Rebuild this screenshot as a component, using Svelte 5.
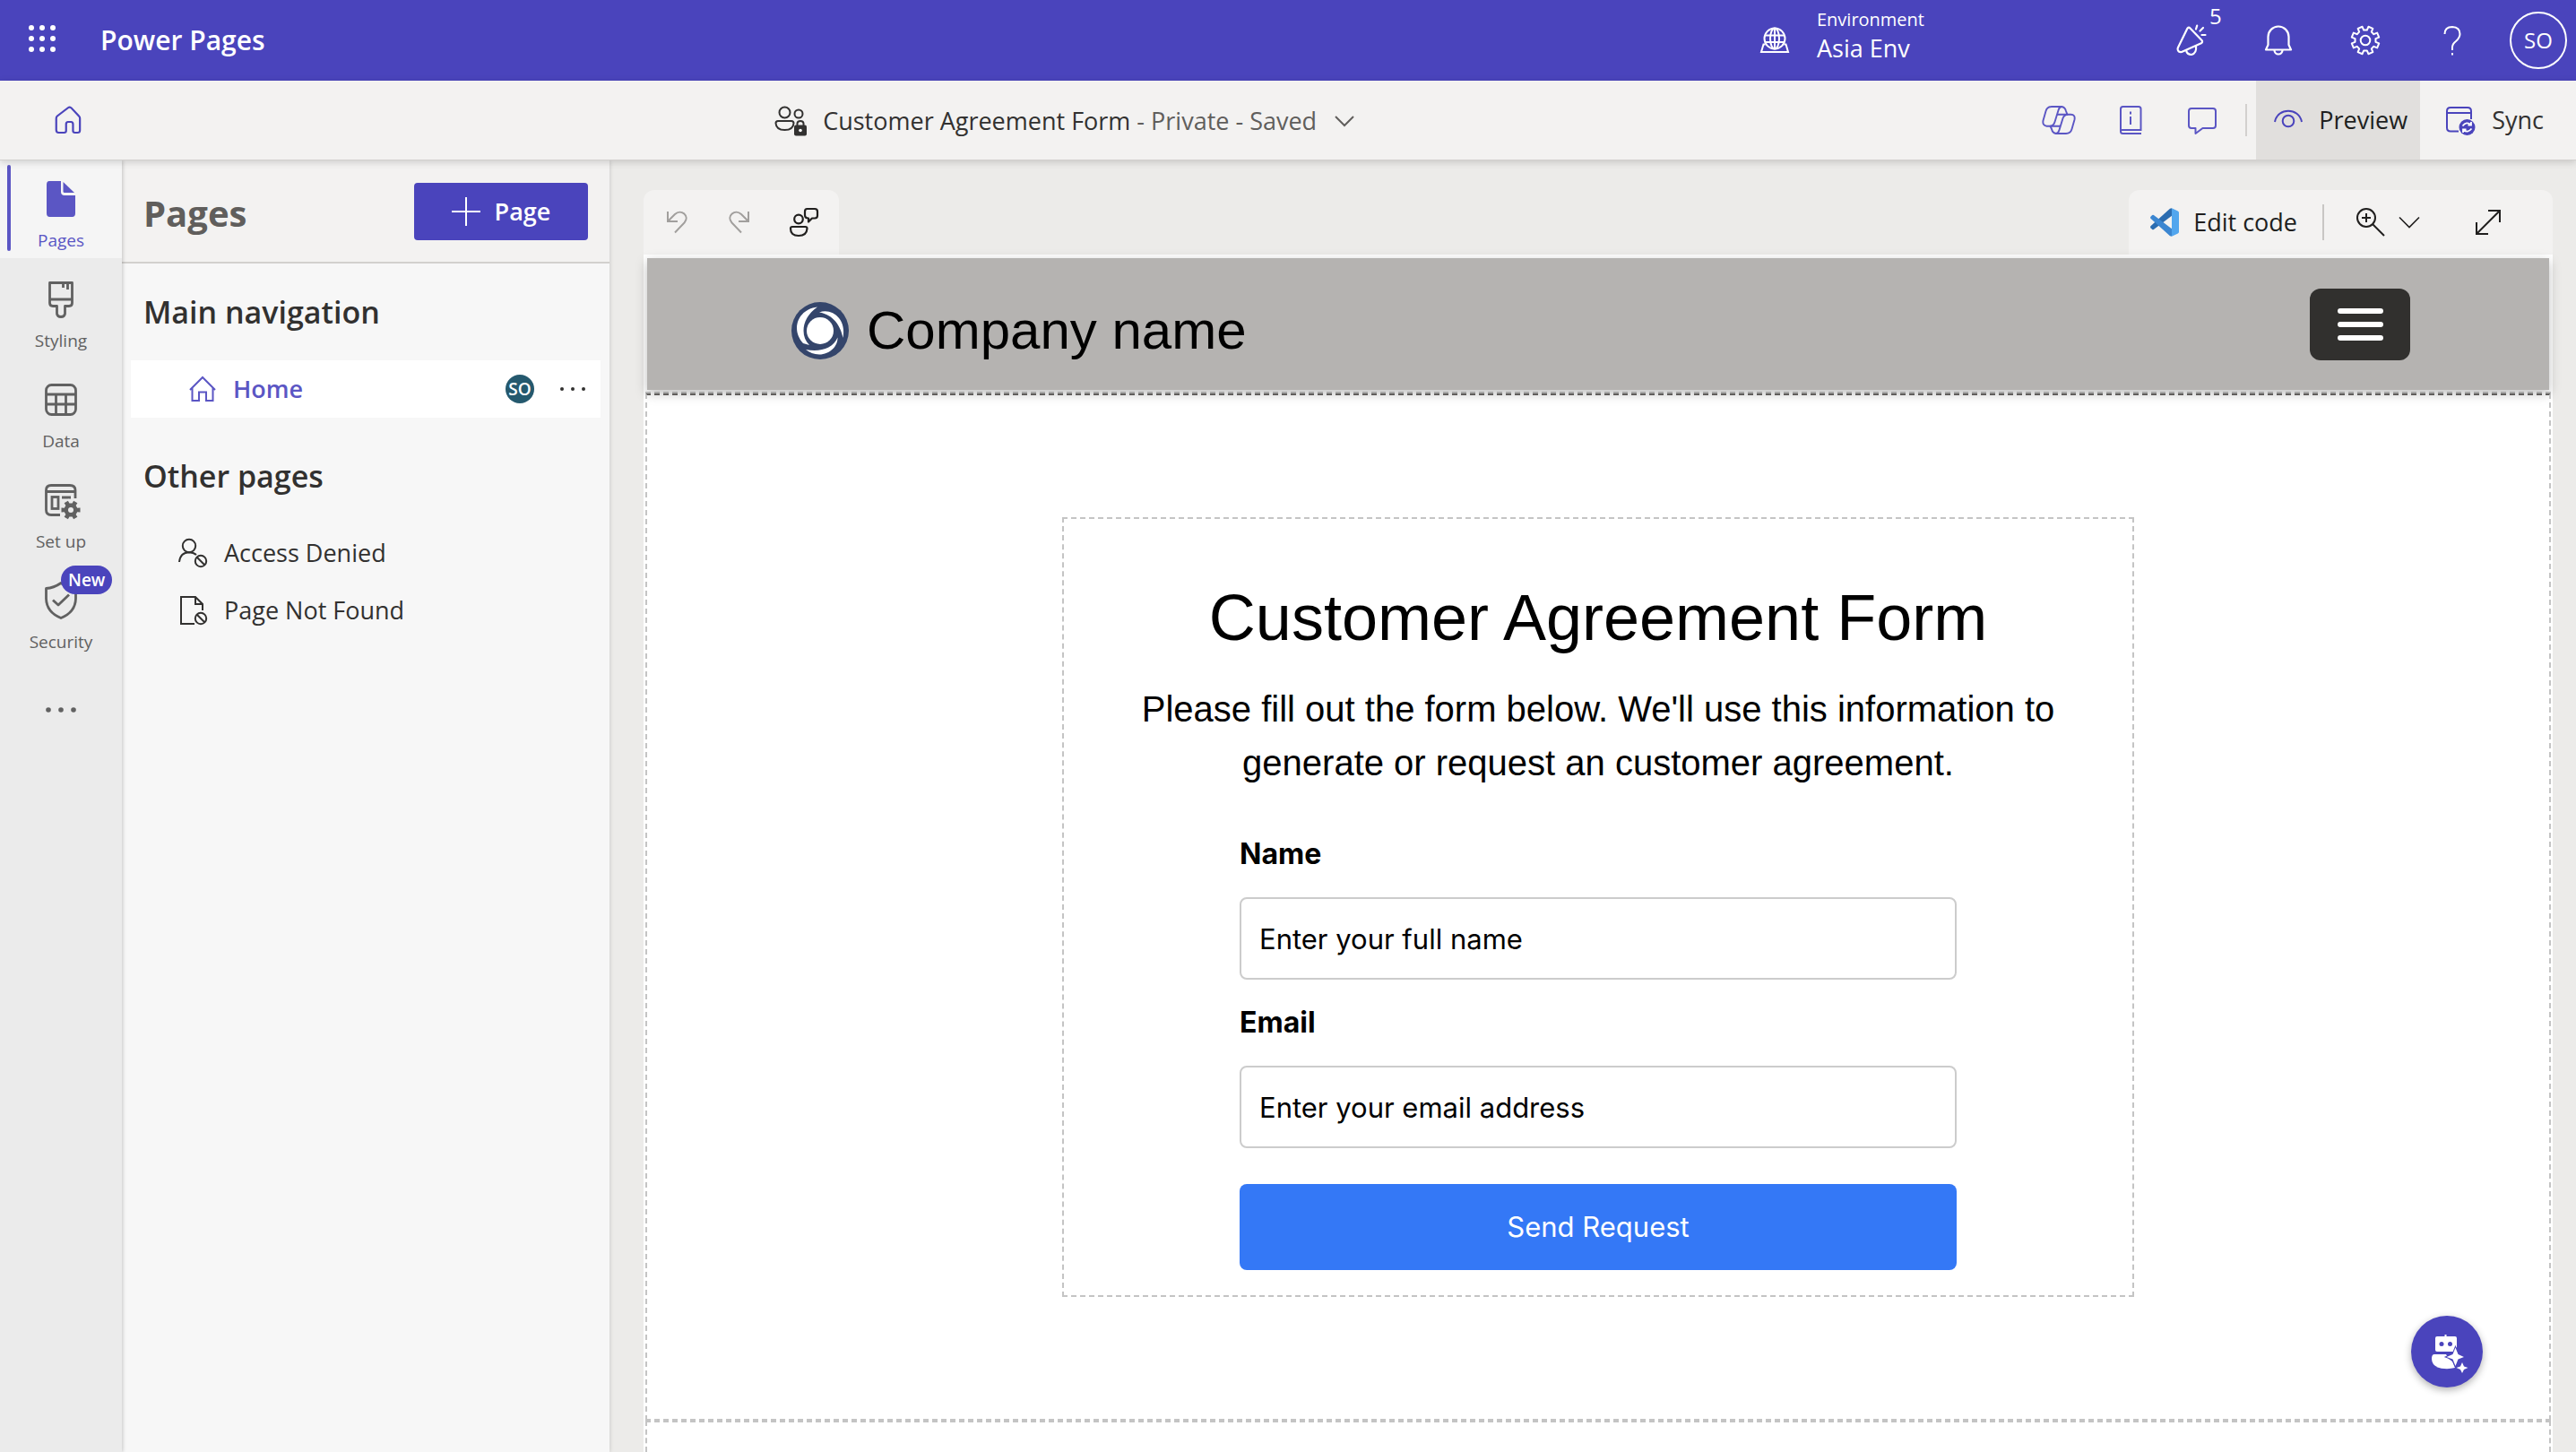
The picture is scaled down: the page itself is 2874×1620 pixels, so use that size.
<script>
  let fullName = $state('');
  let email = $state('');

  // Closed outline of a cog with `teeth` teeth, centred on (cx, cy).
  function cog(cx, cy, teeth, outer, inner, turn) {
    const step = (Math.PI * 2) / teeth;
    const points = [];
    for (let i = 0; i < teeth; i++) {
      const mid = i * step + turn;
      const corners = [
        [inner, -0.3],
        [outer, -0.22],
        [outer, 0.22],
        [inner, 0.3]
      ];
      for (const [r, k] of corners) {
        const a = mid + k * step;
        points.push((cx + r * Math.cos(a)).toFixed(2) + ' ' + (cy + r * Math.sin(a)).toFixed(2));
      }
    }
    return 'M' + points.join('L') + 'Z';
  }

  const settingsCog = cog(17, 17, 8, 15.6, 11.6, Math.PI / 8);
  const setupCog = cog(33, 33, 6, 10.8, 7.6, 0);
</script>

<div class="app">
  <header class="top">
    <button class="waffle" aria-label="App launcher">
      <svg width="32" height="32" viewBox="0 0 32 32" fill="#fff">
        {#each [4, 16, 28] as y}
          {#each [4, 16, 28] as x}
            <circle cx={x} cy={y} r="3" />
          {/each}
        {/each}
      </svg>
    </button>
    <a class="brand" href="#home">Power Pages</a>

    <div class="top-right">
      <button class="env">
        <svg width="34" height="30" viewBox="0 0 34 30" fill="none" stroke="#fff" stroke-width="2">
          <circle cx="17" cy="13" r="11.5" />
          <ellipse cx="17" cy="13" rx="5" ry="11.5" />
          <path d="M6 9.5H28M6 17H28M17 1.500V24.500" />
          <path d="M6.500 19.500H4.500L2 28H32L29.500 19.500H27.500" />
        </svg>
        <span class="env-text">
          <span class="env-label">Environment</span>
          <span class="env-name">Asia Env</span>
        </span>
      </button>
      <button class="top-btn" aria-label="What's new">
        <svg width="34" height="36" viewBox="0 0 34 36" fill="none" stroke="#fff" stroke-width="2.200" stroke-linejoin="round" stroke-linecap="round">
          <path d="M12.500 4.500Q14 3 15.500 4.500L28.500 18Q30 20 27.800 21.200L6 31Q2 31.500 1.600 28Q1.500 27 2 26Z" />
          <path d="M11 29Q12 34 17 34Q23 32.500 22 24.500" />
          <path d="M22 5.500L23.200 1.600M26.500 7.500L30 4M28.500 12H32.500" />
        </svg>
        <span class="count">5</span>
      </button>
      <button class="top-btn" aria-label="Notifications">
        <svg width="32" height="36" viewBox="0 0 32 36" fill="none" stroke="#fff" stroke-width="2.200" stroke-linejoin="round">
          <path d="M4.500 23V14A11.500 11.500 0 0 1 27.500 14V23L30 28.500H2Z" />
          <path d="M11.500 29A4.500 4.500 0 0 0 20.500 29" />
        </svg>
      </button>
      <button class="top-btn" aria-label="Settings">
        <svg width="34" height="34" viewBox="0 0 34 34" fill="none" stroke="#fff" stroke-width="2" stroke-linejoin="round">
          <path d={settingsCog} />
          <circle cx="17" cy="17" r="5.300" />
        </svg>
      </button>
      <button class="top-btn" aria-label="Help">
        <svg width="20" height="34" viewBox="0 0 20 34" fill="none" stroke="#fff" stroke-width="2">
          <path d="M1.500 10Q1.500 2 10 2Q18.500 2.500 18.500 10Q18.500 14 14 18Q10 21 10 25V28" />
          <path d="M10 31V33.500" />
        </svg>
      </button>
      <button class="account" aria-label="Account">SO</button>
    </div>
  </header>

  <div class="command">
    <div class="home-zone">
      <button class="home-btn" aria-label="Home">
        <svg width="32" height="34" viewBox="0 0 32 34" fill="none" stroke="#4a44bc" stroke-width="2" stroke-linejoin="round">
          <path d="M14.500 3.200Q16 2 17.500 3.200L25.500 12.500Q26.500 13.500 26.500 15V28.500Q26.500 31 24 31H21.500Q19.500 31 19.500 29V21.500Q19.500 19 17.500 19H14.500Q12.500 19 12.500 21.500V29Q12.500 31 10.500 31H5Q2.500 31 2.500 28V15Q2.500 13.500 3.500 12.500Z" transform="matrix(1.1 0 0 1 0 0)" />
        </svg>
      </button>
    </div>
    <button class="site">
      <svg width="40" height="36" viewBox="0 0 40 36" fill="none" stroke="#323130" stroke-width="2">
        <circle cx="13.500" cy="8.500" r="6" />
        <circle cx="29" cy="10" r="4.500" />
        <path d="M6 18H21Q23.500 18 23.500 20.500Q23 28 13.500 28Q4 28 3.500 20.500Q3.500 18 6 18Z" />
        <path d="M27.500 23V20.500Q28 18 31 18Q34 18 34.500 20.500V23" />
        <rect x="24" y="22.500" width="14" height="12" rx="2" fill="#323130" stroke="none" />
        <circle cx="31" cy="28.500" r="1.800" fill="#fff" stroke="none" />
      </svg>
      <span class="site-name">Customer Agreement Form <span class="muted">- Private - Saved</span></span>
      <svg width="22" height="14" viewBox="0 0 22 14" fill="none" stroke="#605e5c" stroke-width="2"><path d="M1 2L11 12L21 2" /></svg>
    </button>

    <div class="command-right">
      <button class="cmd-icon" aria-label="Copilot">
        <svg width="38" height="34" viewBox="0 0 38 34" fill="none" stroke="#5b56c4" stroke-width="1.900" stroke-linejoin="round">
          <path d="M11 2H22Q19.500 2.500 18.500 6L14.500 19Q13 23.800 9 23.800H5.500Q.5 23 1.500 17.500L4.500 7Q6 2 11 2Z" />
          <path d="M27 32H16Q18.500 31.500 19.500 28L23.500 15Q25 10.800 29 10.800H32.500Q37.500 11 36.500 16.500L33.500 27Q32 32 27 32Z" />
          <path d="M22 2Q26 2.500 27 7L28.500 10.800H17M16 32Q12 31.500 11 27L9.500 23.800H21" />
        </svg>
      </button>
      <button class="cmd-icon" aria-label="Learn">
        <svg width="26" height="34" viewBox="0 0 26 34" fill="none" stroke="#5b56c4" stroke-width="2">
          <path d="M25 32H4.500Q2 32 2 29.500V4.500Q2 2 4.500 2H22Q24.500 2 24.500 4.500V28H2" />
          <path d="M13 13V22M13 7.500V10.500" />
        </svg>
      </button>
      <button class="cmd-icon" aria-label="Feedback">
        <svg width="34" height="34" viewBox="0 0 34 34" fill="none" stroke="#5b56c4" stroke-width="2" stroke-linejoin="round">
          <path d="M5 4H29Q32 4 32 7V23Q32 26 29 26H17.500L9.500 32V26H5Q2 26 2 23V7Q2 4 5 4Z" />
        </svg>
      </button>
      <span class="bar-line"></span>
      <button class="preview">
        <svg width="32" height="32" viewBox="0 0 32 32" fill="none" stroke="#4a44bc" stroke-width="2">
          <path d="M1 18C4 1.500 28 1.500 31 18" />
          <circle cx="16" cy="17" r="6.300" />
        </svg>
        Preview
      </button>
      <button class="sync">
        <svg width="34" height="34" viewBox="0 0 34 34" fill="none" stroke="#4a44bc" stroke-width="2">
          <path d="M15 29.500H6Q2 29.500 2 25.500V7Q2 3 6 3H25Q29 3 29 7V16M2 9H29" />
          <circle cx="24.500" cy="25" r="9" fill="#4a44bc" stroke="none" />
          <path d="M19.500 23.500Q24 18 28.500 22M29 19V22.500H25.500M29.500 26.500Q25 32 20.500 28M20 31V27.500H23.500" stroke="#fff" stroke-width="1.800" />
        </svg>
        Sync
      </button>
    </div>
  </div>

  <div class="body">
    <nav class="rail" aria-label="Workspaces">
      <button class="rail-item active">
        <svg width="44" height="44" viewBox="0 0 44 44" fill="#5b56c4">
          <path d="M9 2H22V14Q22 18 26 18H38V38Q38 42 34.500 42H9.500Q6 42 6 38V6Q6 2 9 2Z" />
          <path d="M24.500 3L37 15H26Q24.500 15 24.500 13.500Z" />
        </svg>
        <span>Pages</span>
      </button>
      <button class="rail-item">
        <svg width="44" height="44" viewBox="0 0 44 44" fill="none" stroke="#616161" stroke-width="2.800" stroke-linejoin="round">
          <path d="M9.500 3.500H34.500V26Q34.500 29.500 31 29.500H26.500V38Q26 41.500 22 41.500Q18 41.500 17.500 38V29.500H13Q9.500 29.500 9.500 26ZM9.500 22H34.500M24.500 3.500V9M29.500 3.500V11" />
        </svg>
        <span>Styling</span>
      </button>
      <button class="rail-item">
        <svg width="44" height="44" viewBox="0 0 44 44" fill="none" stroke="#616161" stroke-width="2.800">
          <rect x="5.500" y="5.500" width="33" height="33" rx="6" />
          <path d="M5.500 16H38.500M5.500 27H38.500M16.500 16V38.500M27.500 16V38.500" />
        </svg>
        <span>Data</span>
      </button>
      <button class="rail-item">
        <svg width="44" height="44" viewBox="0 0 44 44" fill="none" stroke="#616161" stroke-width="2.800">
          <path d="M21 38.500H11Q5.500 38.500 5.500 33V11Q5.500 5.500 11 5.500H32Q38 5.500 38 11V20M5.500 12.500H38M23 19H33" />
          <rect x="12" y="18.500" width="7" height="13" />
          <path d={setupCog} fill="#616161" stroke="#ebebeb" stroke-width="3" paint-order="stroke" />
          <circle cx="33" cy="33" r="3" fill="#ebebeb" stroke="none" />
        </svg>
        <span>Set up</span>
      </button>
      <button class="rail-item">
        <svg width="44" height="44" viewBox="0 0 44 44" fill="none" stroke="#616161" stroke-width="2.800" stroke-linejoin="round">
          <path d="M22 2.500Q30 8 38.500 8.500V20Q38 35 22 41.500Q6 35 5.500 20V8.500Q14 8 22 2.500Z" />
          <path d="M13 21.500L19 27L31 15.500" />
        </svg>
        <span>Security</span>
        <span class="new">New</span>
      </button>
      <button class="rail-more" aria-label="More">
        <svg width="36" height="8" viewBox="0 0 36 8" fill="#616161">
          <circle cx="4" cy="4" r="2.800" /><circle cx="18" cy="4" r="2.800" /><circle cx="32" cy="4" r="2.800" />
        </svg>
      </button>
    </nav>

    <aside class="panel">
      <div class="panel-head">
        <h1>Pages</h1>
        <button class="add">
          <svg width="32" height="32" viewBox="0 0 32 32" stroke="#fff" stroke-width="2"><path d="M16 0V32M0 16H32" /></svg>
          Page
        </button>
      </div>
      <h2>Main navigation</h2>
      <div class="page-row selected">
        <a class="page-link" href="#home-page">
          <svg width="32" height="32" viewBox="0 0 32 32" fill="none" stroke="#5b56c4" stroke-width="2">
            <path d="M2 17L16 3L30 17M4.500 15V29H12V19.500H20V29H27.500V15" />
          </svg>
          Home
        </a>
        <span class="who">SO</span>
        <button class="row-more" aria-label="Page options">
          <svg width="30" height="6" viewBox="0 0 30 6" fill="#323130">
            <circle cx="3" cy="3" r="2" /><circle cx="15" cy="3" r="2" /><circle cx="27" cy="3" r="2" />
          </svg>
        </button>
      </div>
      <h2 class="others">Other pages</h2>
      <a class="page-row" href="#access-denied">
        <svg width="34" height="34" viewBox="0 0 34 34" fill="none" stroke="#323130" stroke-width="2">
          <circle cx="13" cy="9" r="7.200" />
          <path d="M2 27Q3 16.500 13 16.200Q18 16.300 21 19" />
          <circle cx="26" cy="26" r="6.200" /><path d="M21.500 21.500L30.500 30.500" />
        </svg>
        Access Denied
      </a>
      <a class="page-row" href="#not-found">
        <svg width="34" height="34" viewBox="0 0 34 34" fill="none" stroke="#323130" stroke-width="2">
          <path d="M19 32H4V2H20L28 10V17M20 2V10H28" />
          <circle cx="26" cy="26" r="6.200" /><path d="M21.500 21.500L30.500 30.500" />
        </svg>
        Page Not Found
      </a>
    </aside>

    <main class="studio">
      <div class="tools">
        <div class="tool-group">
          <button class="tool" aria-label="Undo" disabled>
            <svg width="24" height="28" viewBox="0 0 24 28" fill="none" stroke="#a19f9d" stroke-width="2">
              <path d="M2 2V13H13M2 13L10 5C17 -1.500 27 7 20.500 14.500L10 25.500" />
            </svg>
          </button>
          <button class="tool" aria-label="Redo" disabled>
            <svg width="24" height="28" viewBox="0 0 24 28" fill="none" stroke="#a19f9d" stroke-width="2">
              <path d="M22 2V13H11M22 13L14 5C7 -1.500 -3 7 3.500 14.500L14 25.500" />
            </svg>
          </button>
          <button class="tool chat" aria-label="Co-presence">
            <svg width="34" height="34" viewBox="0 0 34 34" fill="none" stroke="#201f1e" stroke-width="2.200" stroke-linejoin="round">
              <circle cx="11" cy="13.500" r="4.800" />
              <path d="M4 22H18.500Q20.500 22 20.500 24Q20 32 11 32Q2 32 2 24Q2 22 4 22Z" />
              <path d="M20.500 2H29Q32 2 32 5V9.500Q32 12.500 29 12.500H26L22 16.500V12.500Q18 12.500 18 9V5Q18 2 20.500 2Z" />
            </svg>
          </button>
        </div>
        <div class="tool-group right">
          <button class="edit">
            <svg width="32" height="32" viewBox="0 0 24 24">
              <path d="M18 .2V6.550L2.926 18Q2.200 18.400 1.650 17.940L.326 16.740Q-.2 16 .326 15.260L16.500 .5Z" fill="#2b6cb0" />
              <path d="M18 23.800V17.450L2.926 6Q2.200 5.600 1.650 6.060L.326 7.260Q-.2 8 .326 8.740L16.500 23.500Z" fill="#3b86d1" />
              <path d="M18 .1L23.150 2.587Q24 3 24 3.939V20.060Q24 21 23.150 21.410L18 23.900Z" fill="#52a6ee" />
            </svg>
            Edit code
          </button>
          <span class="tool-line"></span>
          <button class="zoom" aria-label="Zoom">
            <svg width="34" height="34" viewBox="0 0 34 34" fill="none" stroke="#201f1e" stroke-width="2">
              <circle cx="12" cy="12" r="10" /><path d="M12 7V17M7 12H17M19 19L32 32" />
            </svg>
            <svg width="24" height="14" viewBox="0 0 24 14" fill="none" stroke="#201f1e" stroke-width="1.600"><path d="M1 1.500L12 12.500L23 1.500" /></svg>
          </button>
          <button class="expand" aria-label="Full screen">
            <svg width="30" height="30" viewBox="0 0 30 30" fill="none" stroke="#201f1e" stroke-width="2">
              <path d="M15 2H28V15M2 15V28H15M2 28L28 2" />
            </svg>
          </button>
        </div>
      </div>

      <div class="canvas">
        <div class="site-head">
          <div class="site-nav">
            <a class="company" href="#company">
              <svg width="64" height="64" viewBox="0 0 64 64">
                <circle cx="32" cy="32" r="32" fill="#34456b" />
                <circle cx="32" cy="32" r="15" fill="#fff" />
                <path d="M29 5.500C7 8 -1 31 13 46L20 48C9 37 12 17 29 5.500Z" fill="#fff" />
                <path d="M31 11.500C44 6 62 18 57.500 40C55 27 47 14 31 11.500Z" fill="#fff" />
                <path d="M16 53C32 56 46 52 51.500 39.500C52 49 43 58.500 31 58.500Q22 58 16 53Z" fill="#fff" />
              </svg>
              Company name
            </a>
            <button class="burger" aria-label="Menu"><i></i><i></i><i></i></button>
          </div>
        </div>
        <section class="block">
          <form class="form" onsubmit={(e) => e.preventDefault()}>
            <h2 class="form-title">Customer Agreement Form</h2>
            <p class="form-lead">Please fill out the form below. We'll use this information to generate or request an customer agreement.</p>
            <div class="fields">
              <label for="full-name">Name</label>
              <input id="full-name" type="text" placeholder="Enter your full name" bind:value={fullName} />
              <label for="email">Email</label>
              <input id="email" type="email" placeholder="Enter your email address" bind:value={email} />
              <button class="send" type="submit">Send Request</button>
            </div>
          </form>
        </section>
        <section class="block rest"></section>
        <button class="bot" aria-label="Ask Copilot">
          <svg width="42" height="44" viewBox="0 0 42 44" fill="#fff">
            <path d="M15.500 1H17.500V3H27Q29 3 29 5V15L25 20H7Q5 20 5 18V5Q5 3 7 3H15.500Z" />
            <circle cx="12" cy="11.500" r="2.500" fill="#4a44bc" /><circle cx="21.500" cy="11.500" r="2.500" fill="#4a44bc" />
            <path d="M4 23H17L20 28L24 31L27 38Q21 39.500 15 39Q1 38 1 28Q1 23 4 23Z" />
            <path d="M27.500 15.500L30.500 23L37 26L30.500 28.500L27.500 36L24.500 28.500L17.500 26L24.500 23Z" stroke="#4a44bc" stroke-width="2" paint-order="stroke" />
            <path d="M35 32L37 36.500L41.500 38L37 40L35 44L33 40L28.500 38L33 36.500Z" />
          </svg>
        </button>
      </div>
    </main>
  </div>
</div>

<style>
  :global(body) {
    margin: 0;
  }
  .app {
    display: flex;
    flex-direction: column;
    height: 100vh;
    overflow: hidden;
    font-family: 'Open Sans', 'Noto Sans', sans-serif;
    font-size: 27px;
    line-height: 36px;
    color: #323130;
    background: #ecebe9;
  }
  button {
    padding: 0;
    border: 0;
    background: none;
    font: inherit;
    color: inherit;
  }
  a {
    color: inherit;
    text-decoration: none;
  }
  h1,
  h2,
  p {
    margin: 0;
  }
  svg {
    display: block;
    flex: none;
  }

  .top {
    display: flex;
    align-items: center;
    flex: none;
    height: 90px;
    padding: 0 10px 0 31px;
    background: #4a44bc;
    color: #fff;
  }
  .waffle {
    margin-bottom: 4px;
  }
  .brand {
    margin-left: 49px;
    font-size: 30px;
    font-weight: 600;
    line-height: 40px;
  }
  .top-right {
    display: flex;
    align-items: center;
    height: 100%;
    margin-left: auto;
  }
  .env {
    display: flex;
    align-items: center;
    gap: 30px;
    margin-right: 249px;
    text-align: left;
  }
  .env-text {
    display: flex;
    flex-direction: column;
    padding-bottom: 12px;
  }
  .env-label {
    font-size: 20px;
    line-height: 30px;
  }
  .env-name {
    line-height: 34px;
  }
  .top-btn {
    position: relative;
    display: flex;
    align-items: center;
    justify-content: center;
    width: 97px;
    height: 88px;
  }
  .count {
    position: absolute;
    left: 69px;
    top: 1px;
    font-size: 24px;
    line-height: 32px;
  }
  .account {
    width: 64px;
    height: 64px;
    margin-left: 16px;
    border: 2px solid #fff;
    border-radius: 50%;
    font-size: 24px;
  }

  .command {
    position: relative;
    z-index: 2;
    display: flex;
    align-items: center;
    flex: none;
    height: 88px;
    background: #f3f2f1;
    border-bottom: 1px solid #d2d0ce;
    box-shadow: 0 2px 8px rgba(0, 0, 0, 0.16);
  }
  .home-zone {
    display: flex;
    flex: 0 0 30%;
  }
  .home-btn {
    margin-left: 60px;
  }
  .site {
    display: flex;
    align-items: center;
    gap: 16px;
    padding-top: 2px;
    white-space: nowrap;
  }
  .site-name {
    margin-right: 4px;
  }
  .muted {
    color: #605e5c;
  }
  .command-right {
    display: flex;
    align-items: center;
    height: 100%;
    margin-left: auto;
  }
  .cmd-icon {
    display: flex;
    justify-content: center;
    width: 80px;
  }
  .bar-line {
    width: 2px;
    height: 36px;
    margin: 0 10px 0 8px;
    background: #d2d0ce;
  }
  .preview,
  .sync {
    display: flex;
    align-items: center;
    gap: 18px;
    height: 100%;
  }
  .preview {
    padding: 0 14px 0 20px;
    background: #e1dfdd;
    color: #201f1e;
  }
  .sync {
    padding: 0 36px 0 28px;
  }

  .body {
    display: flex;
    flex: 1;
    min-height: 0;
  }
  .rail {
    position: relative;
    z-index: 1;
    display: flex;
    flex-direction: column;
    flex: none;
    width: 136px;
    background: #ebebeb;
    box-shadow: 1px 0 4px rgba(0, 0, 0, 0.2);
  }
  .rail-item {
    position: relative;
    display: flex;
    flex-direction: column;
    align-items: center;
    gap: 10px;
    height: 112px;
    padding-top: 24px;
    font-size: 19px;
    line-height: 28px;
    color: #616161;
  }
  .rail-item.active {
    height: 109px;
    padding-top: 21px;
    background: #f5f5f5;
    color: #5b56c4;
  }
  .active::before {
    content: '';
    position: absolute;
    left: 8px;
    top: 5px;
    bottom: 8px;
    width: 4px;
    border-radius: 2px;
    background: #5b56c4;
  }
  .new {
    position: absolute;
    left: 68px;
    top: 7px;
    padding: 0 8px;
    border-radius: 16px;
    background: #4a44bc;
    color: #fff;
    font-weight: 600;
    line-height: 32px;
  }
  .rail-more {
    display: flex;
    justify-content: center;
    padding: 52px 0;
  }

  .panel {
    flex: none;
    width: 544px;
    background: #f7f7f7;
    box-shadow: 1px 0 4px rgba(0, 0, 0, 0.12);
  }
  .panel-head {
    display: flex;
    align-items: center;
    justify-content: space-between;
    height: 113px;
    padding: 0 24px;
    border-bottom: 2px solid #d2d0ce;
    background: #f3f2f1;
  }
  h1 {
    padding-top: 4px;
    font-size: 40px;
    line-height: 54px;
    color: #605e5c;
  }
  .add {
    display: flex;
    align-items: center;
    justify-content: center;
    gap: 16px;
    width: 194px;
    height: 64px;
    border-radius: 4px;
    background: #4a44bc;
    color: #fff;
    font-weight: 600;
  }
  .panel h2 {
    padding: 29px 24px;
    font-size: 34px;
    font-weight: 600;
    line-height: 50px;
  }
  .panel .others {
    padding-top: 40px;
  }
  .page-row {
    display: flex;
    align-items: center;
    gap: 18px;
    height: 64px;
    padding-left: 62px;
  }
  .page-row.selected {
    gap: 28px;
    margin: 0 10px;
    padding: 0 16px 0 64px;
    background: #fff;
    color: #5b56c4;
    font-weight: 600;
  }
  .page-link {
    display: flex;
    align-items: center;
    gap: 18px;
    flex: 1;
  }
  .who {
    width: 32px;
    height: 32px;
    border-radius: 50%;
    background: #25596e;
    color: #fff;
    font-size: 19px;
    line-height: 32px;
    text-align: center;
  }

  .studio {
    display: flex;
    flex-direction: column;
    flex: 1;
    min-width: 0;
    padding: 33px 26px 0 38px;
  }
  .tools {
    display: flex;
    justify-content: space-between;
    flex: none;
    height: 72px;
  }
  .tool-group {
    display: flex;
    align-items: center;
    padding: 0 2px;
    border-radius: 12px 12px 0 0;
    background: #f3f2f1;
    color: #201f1e;
  }
  .tool {
    display: flex;
    justify-content: center;
    width: 70px;
  }
  .tool.chat {
    width: 74px;
  }
  .tool-group.right {
    padding: 0 57px 0 24px;
  }
  .edit {
    display: flex;
    align-items: center;
    gap: 16px;
  }
  .tool-line {
    width: 2px;
    height: 40px;
    margin: 0 35px 0 28px;
    background: #c8c6c4;
  }
  .zoom {
    display: flex;
    align-items: center;
    gap: 14px;
    margin-right: 61px;
  }

  .canvas {
    position: relative;
    display: flex;
    flex-direction: column;
    flex: 1;
    padding: 4px 2px 0;
    background: #fff;
  }
  .site-head {
    flex: none;
    padding: 0 2px 2px;
    border-bottom: 2px dashed #c4c4c4;
  }
  .site-nav {
    display: flex;
    align-items: center;
    justify-content: space-between;
    height: 147px;
    padding: 0 155px 0 161px;
    box-sizing: border-box;
    background: #b5b3b1;
    box-shadow: 0 4px 12px rgba(0, 0, 0, 0.25);
  }
  .company {
    display: flex;
    align-items: center;
    gap: 20px;
    padding-top: 14px;
    font-family: 'Liberation Sans', Arial, sans-serif;
    font-size: 60px;
    line-height: 72px;
    color: #000;
  }
  .burger {
    display: flex;
    flex-direction: column;
    align-items: center;
    justify-content: center;
    gap: 9px;
    width: 112px;
    height: 80px;
    border-radius: 12px;
    background: #31302e;
  }
  .burger i {
    width: 51px;
    height: 6px;
    border-radius: 3px;
    background: #fff;
  }
  .block {
    flex: none;
    padding: 136px 20px;
    border: 2px dashed #c4c4c4;
    font-family: 'Liberation Sans', Arial, sans-serif;
    color: #000;
  }
  .site-head + .block {
    border-top-color: #605e5c;
  }
  .rest {
    flex: 1;
    padding: 0;
    border-bottom: 0;
  }
  .form {
    box-sizing: border-box;
    max-width: 1196px;
    margin: 0 auto;
    padding: 62px 80px 28px;
    border: 2px dashed #c4c4c4;
  }
  .form-title {
    font-size: 72px;
    font-weight: 400;
    line-height: 96px;
    text-align: center;
  }
  .form-lead {
    padding-top: 24px;
    font-size: 40px;
    line-height: 60px;
    text-align: center;
  }
  .fields {
    display: flex;
    flex-direction: column;
    max-width: 800px;
    margin: 0 auto;
    padding-top: 48px;
    font-family: Inter, 'Liberation Sans', sans-serif;
    font-size: 31px;
    line-height: 48px;
  }
  .fields label {
    padding-bottom: 24px;
    font-size: 32px;
    font-weight: 700;
  }
  .fields input {
    box-sizing: border-box;
    height: 92px;
    margin-bottom: 24px;
    padding: 0 20px;
    border: 2px solid #ccc;
    border-radius: 8px;
    background: #fff;
    font: inherit;
    color: #000;
  }
  .fields input::placeholder {
    color: #000;
    opacity: 1;
  }
  .send {
    height: 96px;
    margin-top: 16px;
    border-radius: 8px;
    background: #3478f6;
    color: #fff;
  }
  .bot {
    position: absolute;
    right: 78px;
    bottom: 72px;
    display: flex;
    align-items: center;
    justify-content: center;
    width: 80px;
    height: 80px;
    padding: 4px 0 0 6px;
    border-radius: 50%;
    background: #4a44bc;
    box-shadow: 0 3px 8px rgba(0, 0, 0, 0.3);
  }
</style>
